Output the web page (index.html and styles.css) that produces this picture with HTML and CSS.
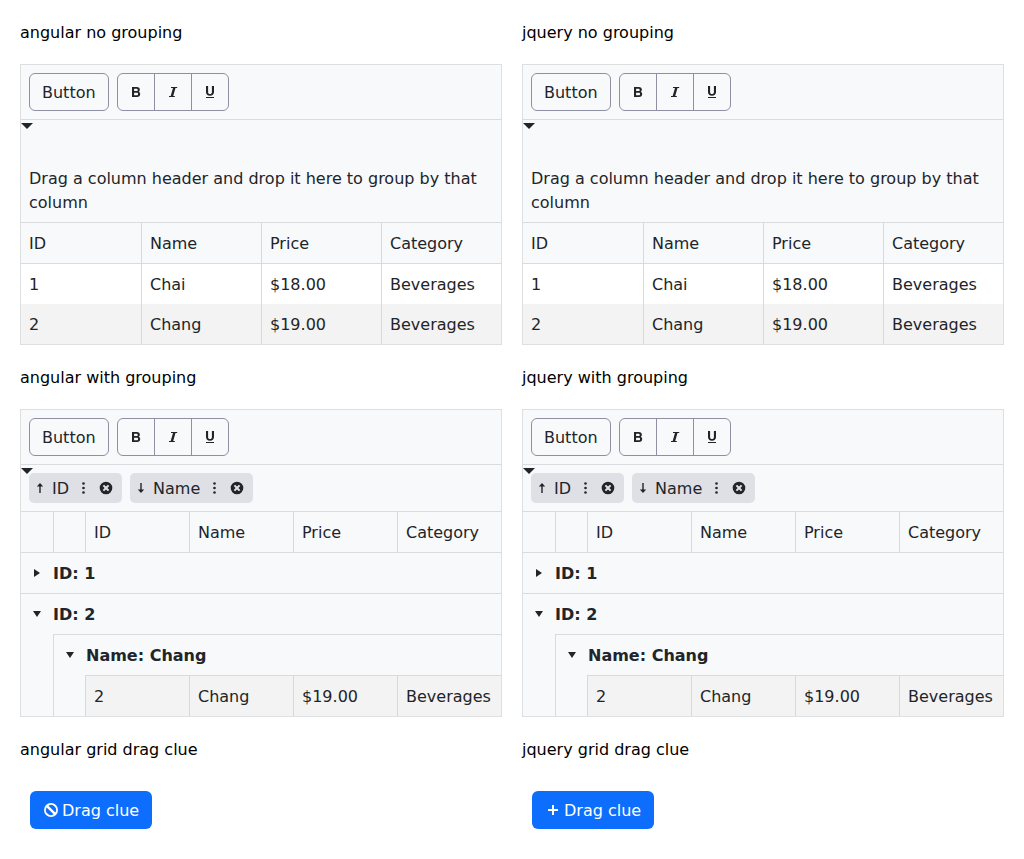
FILE: index.html
```
<!DOCTYPE html>
<html lang="en">
<head>
<meta charset="utf-8">
<title>Grid</title>
<link rel="stylesheet" href="styles.css">
<script src="page.js" defer></script>
</head>
<body>
<svg class="defs" aria-hidden="true">
  <symbol id="arrow-up" viewBox="0 0 16 16"><path d="M8 3 4.800 6.500h2.500V13h1.400V6.500h2.500z"/></symbol>
  <symbol id="arrow-down" viewBox="0 0 16 16"><path d="M8 13 4.800 9.500h2.500V3h1.400v6.500h2.500z"/></symbol>
  <symbol id="more" viewBox="0 0 16 16"><circle cx="7.500" cy="3.500" r="1.300"/><circle cx="7.500" cy="8" r="1.300"/><circle cx="7.500" cy="12.500" r="1.300"/></symbol>
  <symbol id="x-circle" viewBox="0 0 16 16"><path fill-rule="evenodd" d="M8 1.700a6.300 6.300 0 1 0 0 12.600A6.300 6.300 0 0 0 8 1.700zM11.300 9.900 9.900 11.300 8 9.400 6.100 11.300 4.700 9.900 6.600 8 4.700 6.100 6.100 4.700 8 6.600 9.900 4.700 11.300 6.100 9.400 8z"/></symbol>
  <symbol id="caret-right" viewBox="0 0 16 16"><path d="M5 4v8l6-4z"/></symbol>
  <symbol id="caret-down" viewBox="0 0 16 16"><path d="M4 5h8l-4 6z"/></symbol>
  <symbol id="bold" viewBox="0 0 16 16"><path fill-rule="evenodd" d="M4 3h4.800c2 0 3 1 3 2.700 0 1-.5 1.700-1.200 2.100 1 .4 1.600 1.200 1.600 2.300 0 1.900-1.200 2.900-3.200 2.900H4zM6.100 4.700v2.400h2.200c.9 0 1.400-.4 1.400-1.200s-.5-1.200-1.400-1.200zM6.100 8.800v2.500h2.500c1 0 1.500-.5 1.500-1.250s-.5-1.250-1.500-1.250z"/></symbol>
  <symbol id="italic" viewBox="0 0 16 16"><path d="M6 3h6.200v1h-1.700L8.200 12h1.600v1H4v-1h1.700L8 4H6z"/></symbol>
  <symbol id="underline" viewBox="0 0 16 16"><path d="M4 2h2.100v6c0 1.400.7 2 1.900 2s1.900-.6 1.900-2V2H12v6c0 2.400-1.500 3.700-4 3.700S4 10.400 4 8zM4 12.900h8V14H4z"/></symbol>
  <symbol id="cancel" viewBox="0 0 16 16"><path fill-rule="evenodd" d="M8 1a7 7 0 1 0 0 14A7 7 0 0 0 8 1zM5.400 3.700 12.300 10.600A5 5 0 0 0 5.400 3.700zM3.700 5.400A5 5 0 0 0 10.600 12.300z"/></symbol>
  <symbol id="plus" viewBox="0 0 16 16"><path d="M7 3h2v4h4v2H9v4H7V9H3V7h4z"/></symbol>
</svg>

<template id="toolbar">
  <div class="toolbar">
    <button class="button text-button">Button</button>
    <div class="button-group">
      <button class="button icon-button" aria-label="Bold"><svg class="icon"><use href="#bold"/></svg></button>
      <button class="button icon-button" aria-label="Italic"><svg class="icon"><use href="#italic"/></svg></button>
      <button class="button icon-button" aria-label="Underline"><svg class="icon"><use href="#underline"/></svg></button>
    </div>
  </div>
</template>

<template id="plain-grid">
  <div class="grid">
    <div class="toolbar-slot"></div>
    <div class="group-panel group-panel-empty"><i class="drop-clue"></i>Drag a column header and drop it here to group by that column</div>
    <div class="row head"><div>ID</div><div>Name</div><div>Price</div><div>Category</div></div>
    <div class="row"><div>1</div><div>Chai</div><div>$18.00</div><div>Beverages</div></div>
    <div class="row alt"><div>2</div><div>Chang</div><div>$19.00</div><div>Beverages</div></div>
  </div>
</template>

<template id="grouped-grid">
  <div class="grid">
    <div class="toolbar-slot"></div>
    <div class="group-panel">
      <i class="drop-clue"></i>
      <div class="chip"><svg class="icon"><use href="#arrow-up"/></svg><span class="label">ID</span><svg class="icon more"><use href="#more"/></svg><svg class="icon"><use href="#x-circle"/></svg></div>
      <div class="chip"><svg class="icon"><use href="#arrow-down"/></svg><span class="label">Name</span><svg class="icon more"><use href="#more"/></svg><svg class="icon"><use href="#x-circle"/></svg></div>
    </div>
    <div class="row grouped head"><div></div><div></div><div>ID</div><div>Name</div><div>Price</div><div>Category</div></div>
    <div class="group-row"><svg class="icon"><use href="#caret-right"/></svg><span class="label">ID: 1</span></div>
    <div class="group-row line"><svg class="icon"><use href="#caret-down"/></svg><span class="label">ID: 2</span></div>
    <div class="nested">
      <div class="group-row line"><svg class="icon"><use href="#caret-down"/></svg><span class="label">Name: Chang</span></div>
      <div class="nested-rows">
        <div class="row alt"><div>2</div><div>Chang</div><div>$19.00</div><div>Beverages</div></div>
      </div>
    </div>
  </div>
</template>

<main class="page">
  <div class="title">angular no grouping</div>
  <div class="title">jquery no grouping</div>
  <div data-view="plain-grid"></div>
  <div data-view="plain-grid"></div>
  <div class="title">angular with grouping</div>
  <div class="title">jquery with grouping</div>
  <div data-view="grouped-grid"></div>
  <div data-view="grouped-grid"></div>
  <div class="title">angular grid drag clue</div>
  <div class="title">jquery grid drag clue</div>
  <div class="drag-clue"><svg class="icon"><use href="#cancel"/></svg><span class="label">Drag clue</span></div>
  <div class="drag-clue"><svg class="icon"><use href="#plus"/></svg><span class="label">Drag clue</span></div>
</main>
</body>
</html>
```
FILE: page.js
```
const copy = id => document.getElementById(id).content.cloneNode(true);
document.querySelectorAll('[data-view]').forEach(host => {
  host.append(copy(host.dataset.view));
  host.querySelector('.toolbar-slot').replaceWith(copy('toolbar'));
});
```
FILE: styles.css
```
* { box-sizing: border-box; }
body {
  margin: 0;
  background: #fff;
  color: #000;
  font: 16px/24px "DejaVu Sans", sans-serif;
}
.defs { display: none; }
.icon { width: 16px; height: 16px; flex: none; fill: currentColor; }
.label { padding-top: 2px; }
.page {
  display: grid;
  grid-template-columns: 1fr 1fr;
  gap: 20px;
  padding: 20px;
}
.title { height: 24px; padding-top: 1px; }
.grid {
  border: 1px solid #dedfe1;
  background: #f8f9fb;
  color: #212529;
}
.toolbar {
  display: flex;
  gap: 8px;
  padding: 8px;
  border-bottom: 1px solid #dadbde;
}
.button {
  display: flex;
  align-items: center;
  justify-content: center;
  height: 38px;
  padding: 0 12px;
  border: 1px solid #8f8fa3;
  border-radius: 6px;
  background: transparent;
  color: inherit;
  font: inherit;
}
.text-button { padding-top: 2px; }
.button-group { display: flex; }
.icon-button { width: 38px; padding: 0; border-radius: 0; }
.icon-button + .icon-button { margin-left: -1px; }
.icon-button:first-child { border-radius: 6px 0 0 6px; }
.icon-button:last-child { border-radius: 0 6px 6px 0; }
.group-panel {
  position: relative;
  display: flex;
  gap: 8px;
  padding: 8px;
  border-bottom: 1px solid #dadbde;
}
.group-panel-empty { display: block; padding: 47px 8px 7px; }
.drop-clue {
  position: absolute;
  left: 0;
  top: 3px;
  border: 6px solid transparent;
  border-top-color: #212529;
  border-bottom: 0;
}
.chip {
  display: flex;
  align-items: center;
  height: 30px;
  padding: 0 8px 0 3px;
  border-radius: 5px;
  background: #dee0e6;
}
.chip .label { margin: 0 7px 0 4px; }
.chip .more { margin-right: 6px; }
.row {
  display: grid;
  grid-template-columns: repeat(4, minmax(0, 1fr));
  background: #fff;
}
.row > div {
  min-height: 40px;
  padding: 9px 8px 7px;
  border-left: 1px solid #d8d9db;
}
.row > div:first-child { border-left: 0; }
.head { background: #f8f9fb; border-bottom: 1px solid #dadbde; }
.alt { background: #f3f3f3; }
.grouped { grid-template-columns: 32px 32px repeat(4, minmax(0, 1fr)); }
.group-row {
  display: flex;
  align-items: center;
  gap: 8px;
  height: 40px;
  padding: 0 8px;
  font-weight: 700;
}
.group-row.line { height: 41px; border-top: 1px solid #dadbde; }
.nested { margin-left: 32px; border-left: 1px solid #dadbde; }
.nested-rows { margin-left: 31px; border: solid #d8d9db; border-width: 1px 0 0 1px; }
.nested-rows .row { grid-template-columns: 103px repeat(3, minmax(0, 1fr)); }
.drag-clue {
  display: flex;
  align-items: center;
  gap: 3px;
  justify-self: start;
  height: 38px;
  margin: 10px;
  padding: 0 13px;
  border-radius: 6px;
  background: #0d6efd;
  color: #fff;
}
```
